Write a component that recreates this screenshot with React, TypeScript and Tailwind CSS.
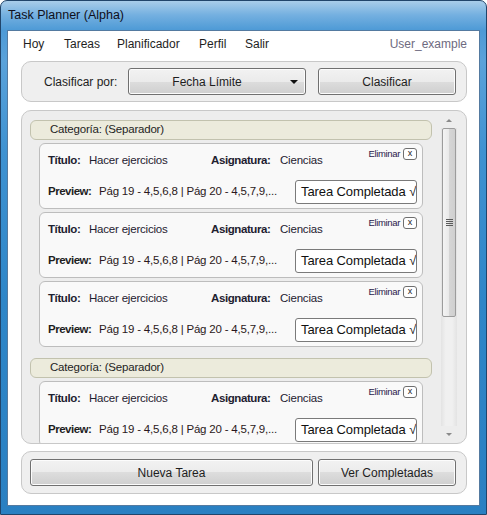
import React from 'react';

const font = { fontFamily: '"Liberation Sans", Arial, sans-serif' };

const btn =
  'flex items-center justify-center rounded-[3px] border border-[#707070] bg-[linear-gradient(180deg,#f2f2f2_0%,#ebebeb_50%,#dddddd_50%,#cfcfcf_100%)] shadow-[inset_0_0_0_1px_#fcfcfc] text-[12px] text-[#1e1e1e]';

const menu = [
  { name: 'Hoy', w: 'w-[41px]' },
  { name: 'Tareas', w: 'w-[53px]' },
  { name: 'Planificador', w: 'w-[82px]' },
  { name: 'Perfil', w: 'w-[46px]' },
  { name: 'Salir', w: 'w-[40px]' },
];

const TaskCard = () => (
  <div className="relative ml-[17px] w-[384px] shrink-0 rounded-[6px] border border-[#bdbdbd] bg-[#f9f9f9] pt-[9px] pb-[4px] pr-[5px]">
    <div className="absolute top-[4px] right-[5px] flex items-center gap-[3px]">
      <span className="whitespace-nowrap text-[9.5px] leading-none tracking-[-0.35px] text-[#2a1a4a]">
        Eliminar
      </span>
      <span className="flex h-[12px] w-[14px] items-center justify-center rounded-[3px] border border-[#6f6f6f] bg-white pb-[2px] text-[9px] leading-none text-[#222]">
        x
      </span>
    </div>
    <div className="flex h-[16px] items-center pl-[8px] text-[11.5px] tracking-[-0.2px] text-[#1e2130]">
      <span className="w-[41px] font-bold tracking-[-0.4px]">Título:</span>
      <span className="w-[122px]">Hacer ejercicios</span>
      <span className="w-[69px] font-bold tracking-[-0.4px]">Asignatura:</span>
      <span>Ciencias</span>
    </div>
    <div className="mt-[11px] flex items-center pl-[8px] text-[11.5px] tracking-[-0.2px] text-[#1e1e1e]">
      <span className="w-[51px] font-bold tracking-[-0.5px]">Preview:</span>
      <span className="text-[#2a1820]">Pág 19 - 4,5,6,8 | Pág 20 - 4,5,7,9,...</span>
      <div className="ml-auto flex h-[24px] w-[122px] items-center overflow-hidden whitespace-nowrap rounded-[3px] border border-[#7a7a7a] bg-white pl-[5px] text-[13px] tracking-[-0.1px] text-[#111]">
        Tarea Completada √
      </div>
    </div>
  </div>
);

const Category = ({ className = '' }: { className?: string }) => (
  <div
    className={`ml-[8px] flex h-[20px] w-[402px] shrink-0 items-center rounded-[6px] border border-[#c2c2ae] bg-[#ecebdc] pl-[19px] text-[11.5px] tracking-[-0.2px] text-[#1e1e1e] ${className}`}
  >
    Categoría: (Separador)
  </div>
);

const ScrollBar = () => (
  <div className="my-[1px] mr-[9px] flex w-[16px] flex-col">
    <div className="flex h-[16px] items-center justify-center">
      <div className="h-0 w-0 border-x-[3px] border-b-[3px] border-x-transparent border-b-[#8a8a8a]" />
    </div>
    <div className="flex flex-1 flex-col bg-[linear-gradient(90deg,#e3e3e3_0%,#f0f0f0_30%,#f0f0f0_70%,#e3e3e3_100%)]">
      <div className="mx-[1px] flex h-[189px] items-center justify-center rounded-[2px] border border-[#9c9c9c] bg-[linear-gradient(90deg,#f4f4f4_0%,#e9e9e9_50%,#d6d6d6_51%,#cfcfcf_100%)]">
        <div className="flex flex-col gap-[1px]">
          <div className="h-[1px] w-[7px] bg-[#5a5a5a]" />
          <div className="h-[1px] w-[7px] bg-[#5a5a5a]" />
          <div className="h-[1px] w-[7px] bg-[#5a5a5a]" />
          <div className="h-[1px] w-[7px] bg-[#5a5a5a]" />
        </div>
      </div>
    </div>
    <div className="flex h-[16px] items-center justify-center">
      <div className="h-0 w-0 border-x-[3px] border-t-[3px] border-x-transparent border-t-[#8a8a8a]" />
    </div>
  </div>
);

export default function App() {
  return (
    <div
      style={font}
      className="flex h-[515px] w-[487px] flex-col rounded-t-[7px] border border-[#21456b] bg-[linear-gradient(180deg,#a9cdea_0px,#74b0e0_14px,#4e9ad6_29px,#5aa2da_60px,#3f92d1_150px,#2e86c8_300px,#2a80c2_100%)]"
    >
      <div className="flex h-[29px] shrink-0 items-center pl-[7px] text-[12.5px] text-[#0f0f1a]">
        Task Planner (Alpha)
      </div>
      <div className="mx-[6px] mb-[8px] flex flex-1 flex-col border border-[#547aa0] bg-white pl-[13px] pr-[12px]">
        <div className="flex h-[30px] shrink-0 items-center pb-[4px] text-[12px] text-[#1e1e1e]">
          <div className="flex pl-[2px]">
            {menu.map((m) => (
              <span key={m.name} className={m.w}>
                {m.name}
              </span>
            ))}
          </div>
          <span className="ml-auto text-[#6e6a80]">User_example</span>
        </div>

        <div className="flex h-[41px] shrink-0 items-center rounded-[10px] border border-[#c8c8c8] bg-[#efefef] pl-[22px] pr-[10px]">
          <span className="w-[84px] text-[12px] text-[#1e1e1e]">Clasificar por:</span>
          <div className={`${btn} relative h-[27px] w-[178px] pr-[20px]`}>
            Fecha Límite
            <div className="absolute right-[7px] top-[11px] h-0 w-0 border-x-[4px] border-t-[4px] border-x-transparent border-t-[#111]" />
          </div>
          <div className={`${btn} ml-auto h-[27px] w-[138px]`}>Clasificar</div>
        </div>

        <div className="mt-[8px] flex h-[334px] shrink-0 overflow-hidden rounded-[10px] border border-[#c8c8c8] bg-[#ededed]">
          <div className="flex flex-1 flex-col gap-[3px] overflow-hidden pt-[9px]">
            <Category />
            <TaskCard />
            <TaskCard />
            <TaskCard />
            <Category className="mt-[8px]" />
            <TaskCard />
          </div>
          <ScrollBar />
        </div>

        <div className="mt-[7px] flex h-[43px] shrink-0 items-center rounded-[10px] border border-[#c8c8c8] bg-[#efefef] pl-[8px] pr-[10px]">
          <div className={`${btn} h-[27px] w-[283px]`}>Nueva Tarea</div>
          <div className={`${btn} ml-auto h-[27px] w-[138px]`}>Ver Completadas</div>
        </div>
      </div>
    </div>
  );
}
